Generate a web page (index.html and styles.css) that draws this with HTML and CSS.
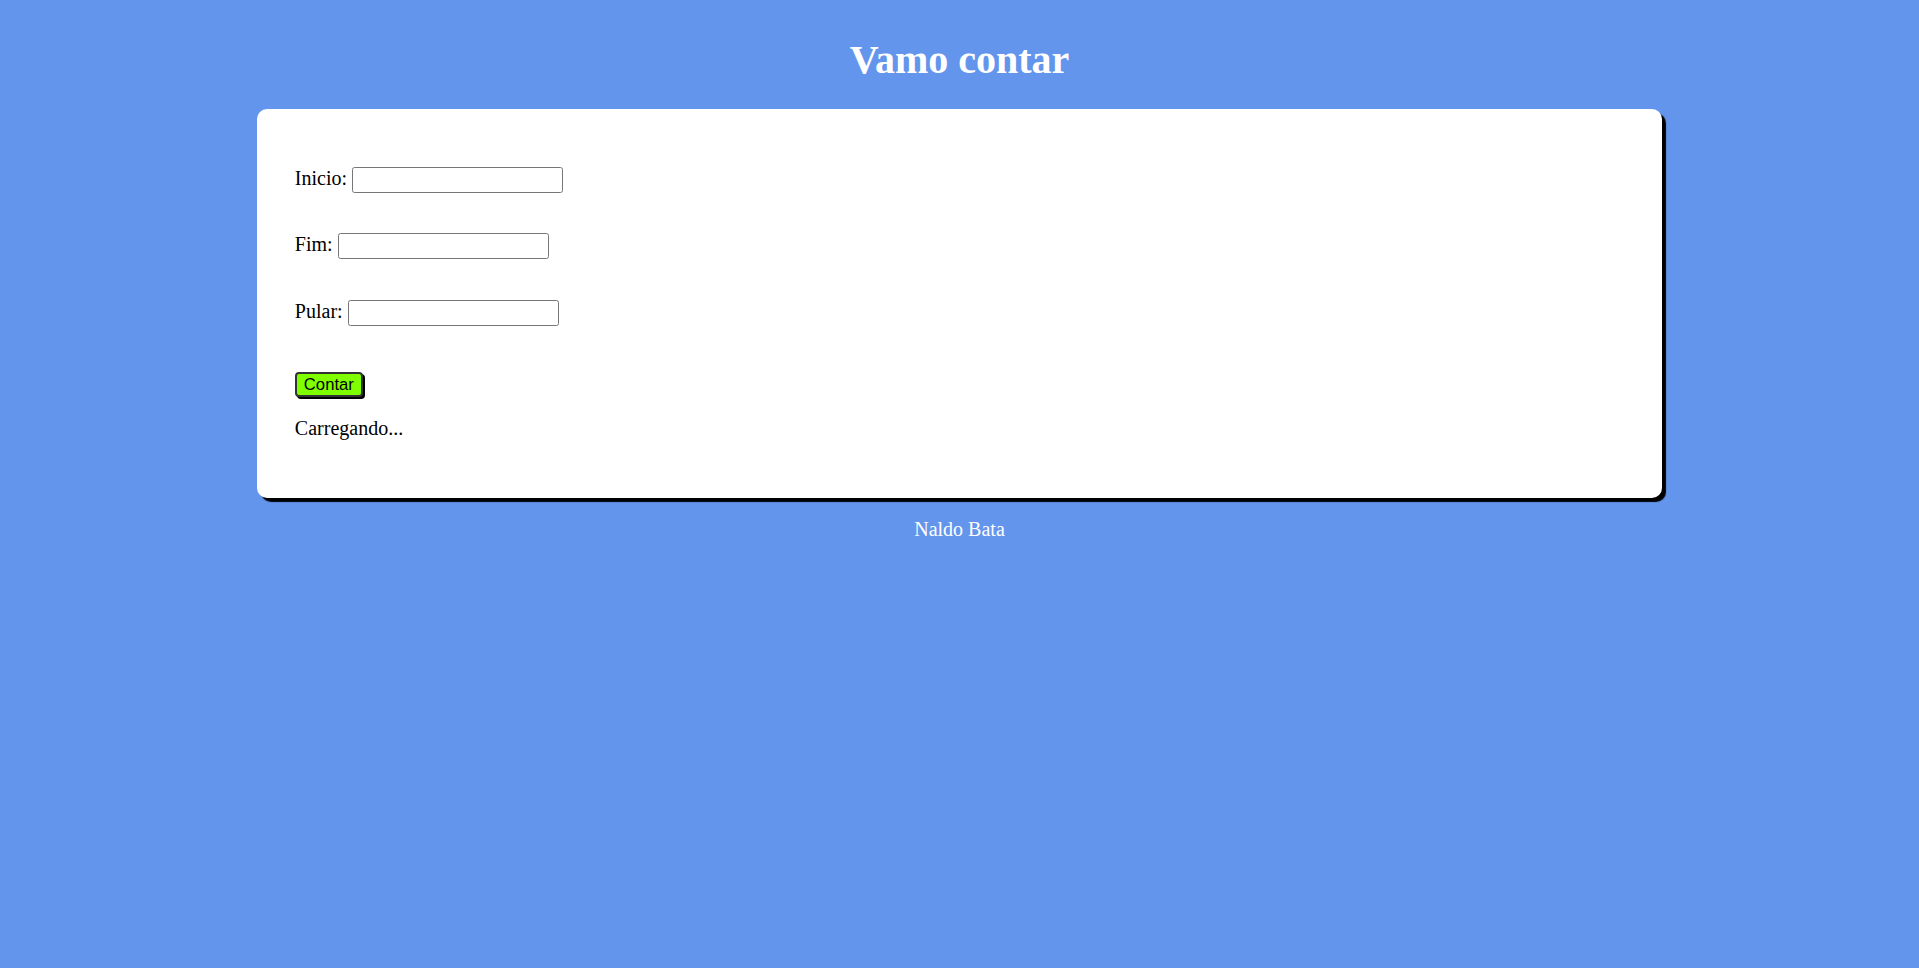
FILE: index.html
```html
<!DOCTYPE html>
<html lang="pt-BR">
<head>
<meta charset="utf-8">
<title>Vamo contar</title>
<link rel="stylesheet" href="styles.css">
</head>
<body>
<header class="top">
  <h1 class="title">Vamo contar</h1>
</header>
<main class="card">
  <div class="form">
    <div class="row"><label class="label" for="inicio">Inicio:</label><input class="field" type="number" id="inicio"></div>
    <div class="row"><label class="label" for="fim">Fim:</label><input class="field" type="number" id="fim"></div>
    <div class="row"><label class="label" for="pular">Pular:</label><input class="field" type="number" id="pular"></div>
    <div class="actions"><button class="btn" type="button">Contar</button></div>
    <p class="status">Carregando...</p>
  </div>
</main>
<footer class="foot">
  <p class="credit">Naldo Bata</p>
</footer>
</body>
</html>
```
FILE: styles.css
```css
html, body {
  background: #6495ed;
}
body {
  margin: 0;
  padding: 10px;
  font-family: "Liberation Serif", "Times New Roman", serif;
  font-size: 20px;
  color: #000;
}
.top {
  display: flow-root;
}
.title {
  margin: 26.5px 0 26.5px;
  font-size: 40px;
  font-weight: bold;
  text-align: center;
  color: #fff;
  line-height: 46px;
}
.card {
  width: 70%;
  margin: 0 auto;
  padding: 37.5px;
  background: #fff;
  border-radius: 10px;
  box-shadow: 4px 4px 1px #000;
}
.form {
  display: flex;
  flex-direction: column;
  align-items: flex-start;
  padding-top: 20px;
}
.row {
  display: flex;
  align-items: baseline;
  gap: 5px;
  height: 26.5px;
}
.row + .row {
  margin-top: 40px;
}
.label {
  font-size: 20px;
}
.field {
  box-sizing: border-box;
  width: 211px;
  height: 26px;
  margin: 0;
  padding: 1px 3px;
  border: 1px solid #767676;
  border-radius: 2.5px;
  background: #fff;
  font-family: "Liberation Sans", Arial, sans-serif;
  font-size: 16.67px;
  -moz-appearance: textfield;
}
.field::-webkit-outer-spin-button,
.field::-webkit-inner-spin-button {
  -webkit-appearance: none;
  margin: 0;
}
.actions {
  margin-top: 45.5px;
}
.btn {
  box-sizing: border-box;
  height: 25px;
  width: 68px;
  padding: 0;
  margin: 0;
  border: 2px solid #333;
  border-radius: 4px;
  background: #7fff00;
  color: #000;
  font-family: "Liberation Sans", Arial, sans-serif;
  font-size: 16.67px;
  line-height: 1;
  box-shadow: 2px 2px 0 #000;
  cursor: pointer;
}
.status {
  margin: 20px 0 20.5px;
  line-height: 23px;
}
.foot {
  text-align: center;
}
.credit {
  margin: 20px 0;
  color: #fff;
  line-height: 23px;
}
```
